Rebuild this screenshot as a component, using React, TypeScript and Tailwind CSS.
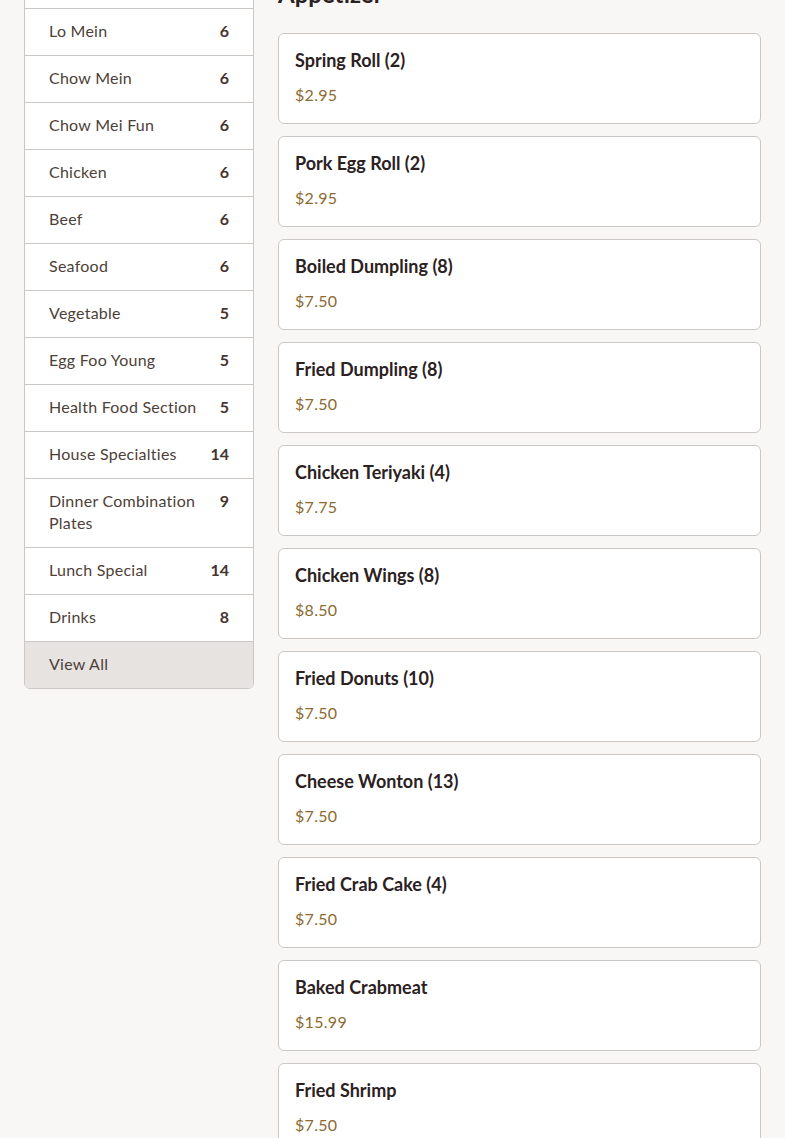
import React from 'react';

interface Category {
  name: string;
  count: number;
}

interface MenuItem {
  name: string;
  price: string;
}

const categories: Category[] = [
  { name: 'Appetizer', count: 13 },
  { name: 'Soup', count: 8 },
  { name: 'Fried Rice', count: 6 },
  { name: 'Lo Mein', count: 6 },
  { name: 'Chow Mein', count: 6 },
  { name: 'Chow Mei Fun', count: 6 },
  { name: 'Chicken', count: 6 },
  { name: 'Beef', count: 6 },
  { name: 'Seafood', count: 6 },
  { name: 'Vegetable', count: 5 },
  { name: 'Egg Foo Young', count: 5 },
  { name: 'Health Food Section', count: 5 },
  { name: 'House Specialties', count: 14 },
  { name: 'Dinner Combination Plates', count: 9 },
  { name: 'Lunch Special', count: 14 },
  { name: 'Drinks', count: 8 },
];

const appetizers: MenuItem[] = [
  { name: 'Spring Roll (2)', price: '$2.95' },
  { name: 'Pork Egg Roll (2)', price: '$2.95' },
  { name: 'Boiled Dumpling (8)', price: '$7.50' },
  { name: 'Fried Dumpling (8)', price: '$7.50' },
  { name: 'Chicken Teriyaki (4)', price: '$7.75' },
  { name: 'Chicken Wings (8)', price: '$8.50' },
  { name: 'Fried Donuts (10)', price: '$7.50' },
  { name: 'Cheese Wonton (13)', price: '$7.50' },
  { name: 'Fried Crab Cake (4)', price: '$7.50' },
  { name: 'Baked Crabmeat', price: '$15.99' },
  { name: 'Fried Shrimp', price: '$7.50' },
  { name: 'Fried Scallops', price: '$7.50' },
  { name: 'Pu Pu Platter (for 2)', price: '$16.95' },
];

export default function App() {
  return (
    <div className="min-h-screen bg-[#f9f7f5] font-['Lato','Noto_Sans',sans-serif] text-[#4a3b35]">
      <div className="-mt-[157px] flex items-start gap-6 p-6">
        {/* category sidebar */}
        <aside className="w-[230px] shrink-0 overflow-hidden rounded-md border border-[#cac7c4] bg-white">
          {categories.map((cat) => (
            <div
              key={cat.name}
              className="flex items-start justify-between gap-4 border-b border-[#cac7c4] px-6 pt-[11px] pb-[13px] text-base leading-[22px]"
            >
              <span className="tracking-[0.25px] text-[#4d3f39]">{cat.name}</span>
              <span className="font-bold text-[#45352e]">{cat.count}</span>
            </div>
          ))}
          <div className="bg-[#e6e3e0] px-6 pt-[11px] pb-[13px] text-base leading-[22px] tracking-[0.25px] text-[#4d3f39]">
            View All
          </div>
        </aside>

        {/* menu items */}
        <main className="min-w-0 flex-1">
          <h2 className="mt-[111px] text-2xl font-bold leading-8 text-[#2b211e]">Appetizer</h2>
          <div className="mt-[23px] flex flex-col gap-3">
            {appetizers.map((item) => (
              <div key={item.name} className="rounded-md border border-[#cac7c4] bg-white px-4 pt-[15px] pb-[17px]">
                <div className="text-lg font-bold leading-[23px] text-[#2b211e]">{item.name}</div>
                <div className="mt-3 text-base leading-[22px] tracking-[0.3px] text-[#8b6a2f]">{item.price}</div>
              </div>
            ))}
          </div>
        </main>
      </div>
    </div>
  );
}
